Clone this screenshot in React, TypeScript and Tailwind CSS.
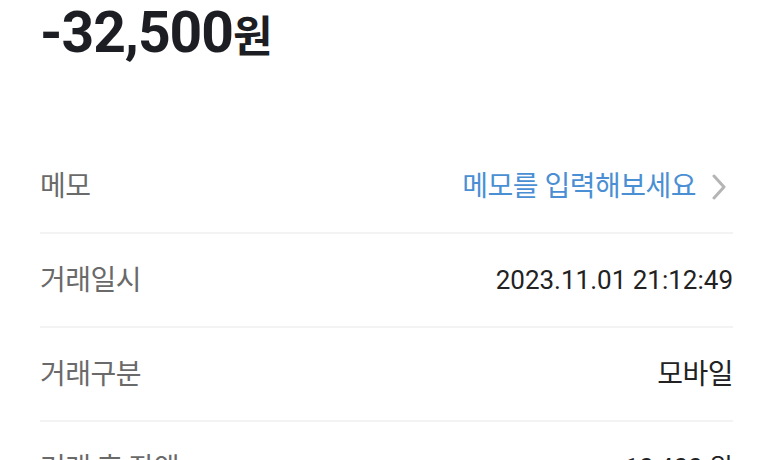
import React from "react";

const font = { fontFamily: "Roboto, 'Noto Sans CJK KR', sans-serif" };

function Row({ label, children }: { label: string; children: React.ReactNode }) {
  return (
    <div className="flex h-[94px] items-center justify-between border-b-2 border-[#f3f3f3] pt-[1px]">
      <span className="text-[28px] text-[#6a6a6a] tracking-[-0.5px]">{label}</span>
      {children}
    </div>
  );
}

export default function App() {
  return (
    <div className="min-h-screen w-full bg-white px-[40px]" style={font}>
      <div className="h-[140px] pt-[4px]">
        <div className="text-[57px] font-bold leading-[1] text-[#1c1e24] tracking-[-1px]">
          -32,500<span className="text-[43px] tracking-[0px]">원</span>
        </div>
      </div>
      <div className="w-[693px]">
        <Row label="메모">
          <div className="flex items-center gap-[15px] pr-[6px]">
            <span className="text-[28px] text-[#4a8fd3] tracking-[-0.5px]">메모를 입력해보세요</span>
            <svg width="16" height="26" viewBox="0 0 16 26" fill="none">
              <path d="M3 2 L13 13 L3 24" stroke="#b5b5b5" strokeWidth="3" strokeLinecap="round" strokeLinejoin="round" />
            </svg>
          </div>
        </Row>
        <Row label="거래일시">
          <span className="text-[26px] text-[#222222]">2023.11.01 21:12:49</span>
        </Row>
        <Row label="거래구분">
          <span className="text-[28px] text-[#222222] tracking-[-0.5px]">모바일</span>
        </Row>
        <Row label="거래 후 잔액">
          <span className="text-[26px] text-[#222222]">10,400 원</span>
        </Row>
      </div>
    </div>
  );
}
